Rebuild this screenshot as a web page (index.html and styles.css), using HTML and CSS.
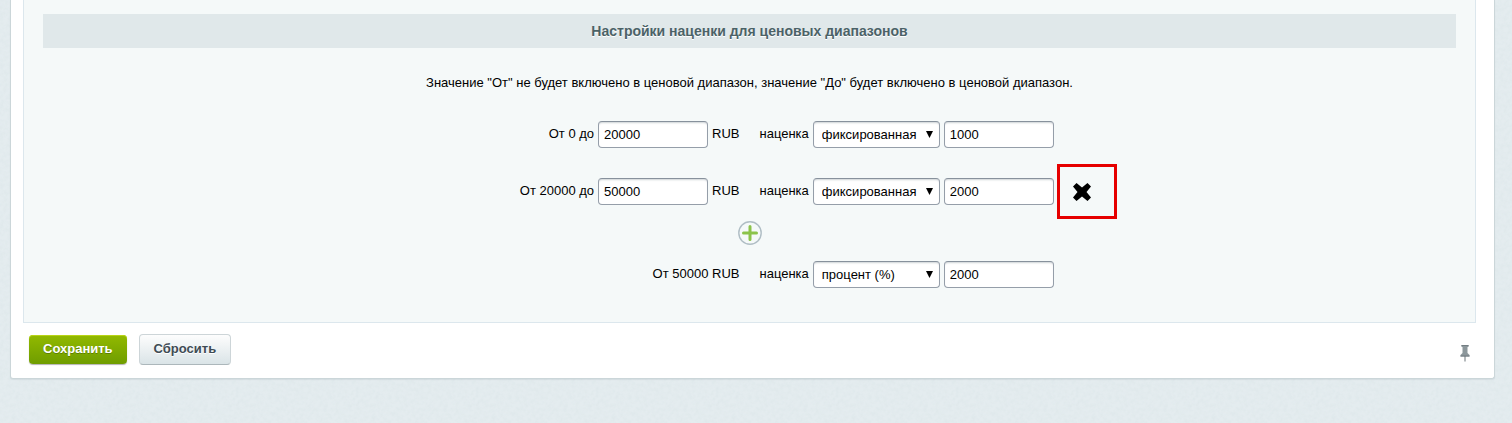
FILE: index.html
```html
<!DOCTYPE html>
<html lang="ru">
<head>
  <meta charset="UTF-8">
  <meta name="viewport" content="width=device-width, initial-scale=1.0">
  <title>Настройки наценки</title>
  <link rel="stylesheet" href="styles.css">
</head>
<body>
  <form class="content">
    <div class="panel">
      <h2 class="heading">Настройки наценки для ценовых диапазонов</h2>
      <p class="note">Значение "От" не будет включено в ценовой диапазон, значение "До" будет включено в ценовой диапазон.</p>

      <!-- Price ranges -->
      <div class="row">
        <div class="cell cell-left">
          <label for="to1">От 0 до</label>
          <input class="field" type="text" id="to1" value="20000">
          <span>RUB</span>
        </div>
        <div class="cell">
          <label for="type1">наценка</label>
          <select class="field select" id="type1">
            <option selected>фиксированная</option>
            <option>процент (%)</option>
          </select>
          <input class="field" type="text" aria-label="Размер наценки" value="1000">
        </div>
      </div>

      <div class="row">
        <div class="cell cell-left">
          <label for="to2">От 20000 до</label>
          <input class="field" type="text" id="to2" value="50000">
          <span>RUB</span>
        </div>
        <div class="cell">
          <label for="type2">наценка</label>
          <select class="field select" id="type2">
            <option selected>фиксированная</option>
            <option>процент (%)</option>
          </select>
          <input class="field" type="text" aria-label="Размер наценки" value="2000">
        </div>
        <button class="remove" type="button" aria-label="Удалить">
          <svg width="20" height="20" viewBox="0 0 20 20">
            <path d="M4.500 1 10 5.500 15.500 1 19 4.500 14.500 10 19 15.500 15.500 19 10 14.500 4.500 19 1 15.500 5.500 10 1 4.500Z"/>
          </svg>
        </button>
      </div>

      <button class="add" type="button" aria-label="Добавить">
        <svg width="24" height="24" viewBox="0 0 24 24" fill="none">
          <circle cx="12" cy="12" r="11.2" stroke="#b0bec5" stroke-width="1.4"/>
          <path d="M12 5.5V18.5M5.5 12H18.5" stroke="#8bc34a" stroke-width="3" stroke-linecap="round"/>
        </svg>
      </button>

      <div class="row row-last">
        <div class="cell cell-left">
          <span>От 50000 RUB</span>
        </div>
        <div class="cell">
          <label for="type3">наценка</label>
          <select class="field select" id="type3">
            <option>фиксированная</option>
            <option selected>процент (%)</option>
          </select>
          <input class="field" type="text" aria-label="Размер наценки" value="2000">
        </div>
      </div>
    </div>

    <div class="footer">
      <button class="btn btn-save" type="submit">Сохранить</button>
      <button class="btn btn-reset" type="reset">Сбросить</button>
      <button class="pin" type="button" aria-label="Закрепить">
        <svg width="10" height="17" viewBox="0 0 10 17">
          <path d="M1.5 0H8.5V2H7.5V8L9.5 10V11.5H.5V10L2.5 8V2H1.5Z" fill="#8c979b"/>
          <path d="M1.5 0H8.5V1H1.5ZM.5 10.5H9.5V11.5H.5Z" fill="#737d82"/>
          <path d="M4.5 11H5.5V16.5H4.5Z" fill="#6c767b"/>
        </svg>
      </button>
    </div>
  </form>
</body>
</html>
```

FILE: styles.css
```css
html {
  background-color: #e4ecef;
  /* paper grain */
  background-image: url("data:image/svg+xml,%3Csvg xmlns='http://www.w3.org/2000/svg' width='120' height='120'%3E%3Cfilter id='n' x='0' y='0' width='100%25' height='100%25'%3E%3CfeTurbulence type='fractalNoise' baseFrequency='.25' numOctaves='2' stitchTiles='stitch'/%3E%3CfeColorMatrix values='0 0 0 0 .7 0 0 0 0 .78 0 0 0 0 .8 .9 0 0 0 -.3'/%3E%3C/filter%3E%3Crect width='120' height='120' filter='url(%23n)'/%3E%3C/svg%3E");
}

body {
  margin: 0;
  padding: 0 17px 40px 10px;
  font-family: Arial, "Liberation Sans", sans-serif;
  font-size: 13px;
  color: #000;
}

.content {
  background: #fff;
  border: 1px solid #cbd6d9;
  border-top: none;
  border-radius: 0 0 3px 3px;
  box-shadow: 0 1px 1px rgba(150, 170, 175, 0.2);
}

.panel {
  margin: 0 18px 0 12px;
  padding: 14px 19px 33px;
  background: #f5f9f9;
  border: 1px solid #dce7ed;
  border-top: none;
}

.heading {
  margin: 0 0 26px;
  background: #e0e8ea;
  color: #4b6267;
  font-size: 14px;
  line-height: 34px;
  text-align: center;
  text-shadow: 0 1px #fff;
}

.note {
  margin: 0 0 14px;
  line-height: 18px;
  text-align: center;
}

/* two halves that meet in the middle of the panel */
.row {
  position: relative;
  display: grid;
  grid-template-columns: 1fr 1fr;
  column-gap: 20px;
  align-items: center;
  min-height: 57px;
}

.row-last {
  min-height: 30px;
}

.cell {
  display: flex;
  align-items: center;
  gap: 4px;
}

.cell-left {
  justify-content: flex-end;
}

.cell label,
.cell span {
  padding-bottom: 2px;
}

.field {
  box-sizing: border-box;
  width: 110px;
  height: 27px;
  padding: 0 5px;
  border: 1px solid #959ea9;
  border-top-color: #87919c;
  border-radius: 4px;
  background-color: #fff;
  box-shadow: inset 0 2px 2px -1px #cdd3d6;
  color: #000;
  font: inherit;
}

.select {
  appearance: none;
  width: 127px;
  padding: 0 20px 0 8px;
  background-image: url("data:image/svg+xml,%3Csvg xmlns='http://www.w3.org/2000/svg' width='7' height='7'%3E%3Cpath d='M0 0H7L3.500 7Z'/%3E%3C/svg%3E");
  background-repeat: no-repeat;
  background-position: right 6px center;
}

.remove,
.add,
.pin {
  display: flex;
  padding: 0;
  border: none;
  background: none;
  cursor: pointer;
}

.remove {
  box-sizing: border-box;
  position: absolute;
  top: 1px;
  left: calc(50% + 307px);
  align-items: center;
  width: 60px;
  height: 55px;
  padding-left: 12px;
  border: 3px solid #e60000;
}

.add {
  margin: 1px auto 14px;
}

.footer {
  display: flex;
  align-items: center;
  gap: 12px;
  padding: 11px 24px 13px 18px;
}

.btn {
  box-sizing: border-box;
  height: 31px;
  padding: 0 14px 2px;
  border: none;
  border-radius: 4px;
  font: bold 13px Arial, "Liberation Sans", sans-serif;
  cursor: pointer;
}

.btn-save {
  height: 29px;
  background: linear-gradient(#92b900, #6f9d00);
  box-shadow: 0 1px 1px rgba(0, 0, 0, 0.3), inset 0 1px #b9d416;
  color: #fff;
  text-shadow: 0 1px rgba(70, 100, 0, 0.6);
}

.btn-reset {
  background: linear-gradient(#fdfdfd, #dae4e7);
  border: 1px solid #cdd5d8;
  border-bottom-color: #acb7bb;
  color: #3f4b54;
  text-shadow: 0 1px #fff;
}

.pin {
  margin: 8px 0 0 auto;
}
```
